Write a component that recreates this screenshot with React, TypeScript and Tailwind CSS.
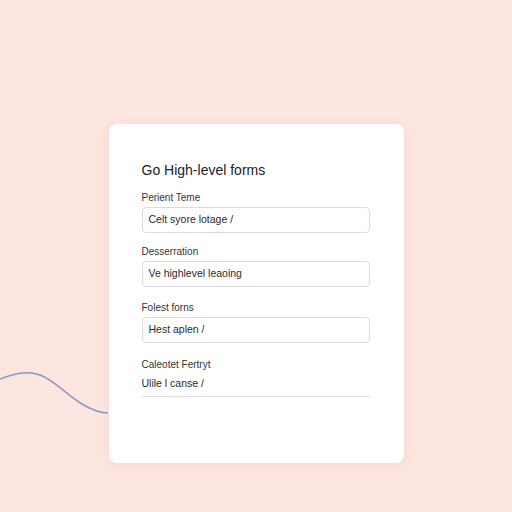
import React from 'react'

const fields = [
  { label: 'Perient Teme', value: 'Celt syore lotage /', kind: 'box', gap: '' },
  { label: 'Desserration', value: 'Ve highlevel leaoing', kind: 'box', gap: 'mt-[11px]' },
  { label: 'Folest forns', value: 'Hest aplen /', kind: 'box', gap: 'mt-[13px]' },
  { label: 'Caleotet Fertryt', value: 'Ulile l canse /', kind: 'line', gap: 'mt-[14px]' },
]

export default function App() {
  return (
    <div
      className="relative w-[512px] h-[512px] bg-[#fde5e0] flex justify-center pt-[124px] overflow-hidden"
      style={{ fontFamily: '"Liberation Sans", Arial, sans-serif' }}
    >
      <svg className="absolute left-0 top-[360px]" width="112" height="60" viewBox="0 0 112 60">
        <path d="M0 19 C 14 14, 26 10, 40 15 C 60 22, 80 52, 108 53" fill="none" stroke="#8b9ac4" strokeWidth="1.6" />
      </svg>
      <div className="relative w-[295px] h-[339px] bg-white rounded-lg shadow-[0_2px_10px_rgba(200,140,130,0.15)] pl-[33px] pr-[34px] pt-[36px]">
        <h1 className="text-[14px] text-[#222] leading-5">Go High-level forms</h1>
        <div className="mt-[10px] flex flex-col">
          {fields.map((f, i) => (
            <div key={i} className={f.gap}>
              <div className="text-[10px] text-[#333] leading-4">{f.label}</div>
              {f.kind === 'box' ? (
                <div className="mt-[1px] h-[26px] border border-[#dcdcdc] rounded-[4px] flex items-center px-[6px] text-[10.5px] text-[#2a2a2a]">
                  {f.value}
                </div>
              ) : (
                <div className="mt-[2px] h-[22px] border-b border-[#dedede] text-[10.5px] text-[#2a2a2a] leading-4">
                  {f.value}
                </div>
              )}
            </div>
          ))}
        </div>
      </div>
    </div>
  )
}
